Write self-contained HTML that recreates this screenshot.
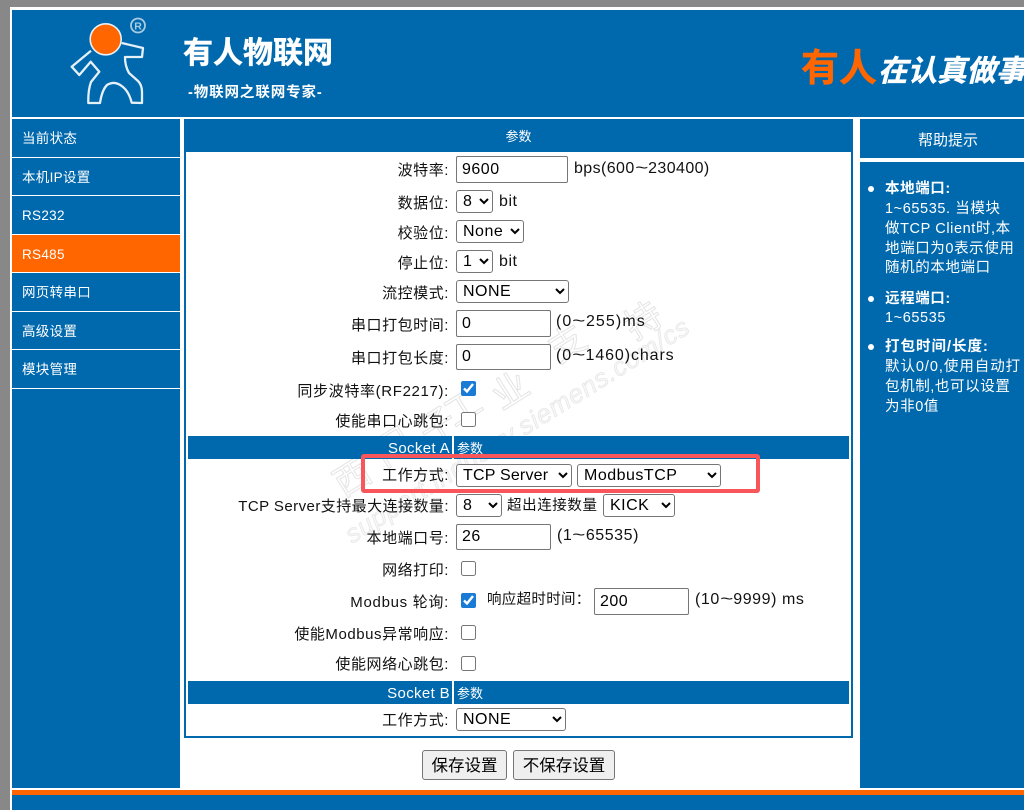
<!DOCTYPE html>
<html lang="zh"><head><meta charset="utf-8"><title>有人物联网</title>
<style>
html,body{margin:0;padding:0;width:1024px;height:810px;overflow:hidden;background:#fff}
body{position:relative;font-family:"Liberation Sans","Noto Sans CJK SC",sans-serif;color:#111}
.a,.l,.t,select,input{position:absolute}
.a{display:block}
.b{background:#0068ad}
.l{right:575px;margin-top:1px;font-size:15px;line-height:20px;white-space:nowrap;letter-spacing:.55px;text-align:right}
.t{font-size:16px;line-height:20px;white-space:nowrap;letter-spacing:.55px}
.t i{font-style:normal;display:inline-block;width:13.5px;letter-spacing:0;text-align:center;transform:scaleX(1.4)}
select,input[type=text]{box-sizing:border-box;margin:0;font-family:"Liberation Sans",sans-serif;font-size:16px;letter-spacing:.5px;color:#000;background:#fff;border:1px solid #767676;border-radius:3px}
select{padding:0 0 0 2px}
input[type=text]{padding:1px 5px;border-radius:2px}
input[type=checkbox]{margin:0;width:15px;height:15px;accent-color:#1a7bd6}
.n{position:absolute;left:12px;width:168px;margin-top:1px;color:#fff;font-size:13.5px;line-height:20px;text-indent:10px;letter-spacing:.3px}
.w{color:#fff;position:absolute;white-space:nowrap}
.h{position:absolute;left:885px;color:#fff;font-size:14.5px;line-height:20px;white-space:nowrap;letter-spacing:.6px}
.d{position:absolute;left:868px;width:6px;height:6px;border-radius:50%;background:#fff}
button{position:absolute;box-sizing:border-box;margin:0;padding:0 0 2px;font-family:"Liberation Sans","Noto Sans CJK SC",sans-serif;font-size:16.5px;color:#000;background:#efefef;border:1px solid #767676;border-radius:3px}
</style></head><body>
<div class="a" style="left:0;top:0;width:1024px;height:7px;background:#888"></div>
<div class="a" style="left:0;top:0;width:10px;height:810px;background:#888"></div>
<div class="a b" style="left:12px;top:10px;width:1012px;height:107px"></div>

<svg class="a" style="left:60px;top:10px" width="100" height="100" viewBox="60 10 100 100">
<path d="M121.700 43L143 48L142 57L125 57Q125 66 129 73L138 81Q142 85 142 92L142 103L131.700 102.700Q129 92 123 87Q115 80 107 85Q102 90 100 103L88.300 103Q88 90 91 82L99.300 71.700L90.700 61.700L79.300 75L71.700 66.700L91 50.700" fill="none" stroke="#e6f0f7" stroke-width="2.300" stroke-linejoin="round"/>
<circle cx="105.700" cy="39.300" r="15.500" fill="#ff6600" stroke="#e6f0f7" stroke-width="1.600"/>
<circle cx="138" cy="25.500" r="7" fill="none" stroke="#a9cbe3" stroke-width="1.800"/>
<text x="138" y="29.500" font-size="10.500" font-weight="bold" fill="#a9cbe3" text-anchor="middle" font-family="Liberation Sans">R</text>
</svg>
<div class="w" style="left:183px;top:34px;font-size:30px;line-height:40px;font-weight:bold;-webkit-text-stroke:.5px #fff">有人物联网</div>
<div class="w" style="left:188px;top:83px;font-size:14.500px;line-height:20px;font-weight:bold;letter-spacing:.9px">-物联网之联网专家-</div>
<div class="w" style="left:801px;top:45px;font-size:38px;line-height:48px;font-weight:bold;color:#ff6600;-webkit-text-stroke:.4px #ff6600">有人</div>
<div class="w" style="left:878px;top:51px;width:146px;overflow:hidden;font-size:29.500px;line-height:42px;font-weight:bold;font-style:italic;-webkit-text-stroke:.5px #fff">在认真做事</div>

<div class="a b" style="left:12px;top:119px;width:168px;height:669px"></div>
<div class="a" style="left:12px;top:157px;width:168px;height:1px;background:#fff"></div>
<div class="a" style="left:12px;top:195px;width:168px;height:1px;background:#fff"></div>
<div class="a" style="left:12px;top:234px;width:168px;height:1px;background:#fff"></div>
<div class="a" style="left:12px;top:235px;width:168px;height:37px;background:#ff6600"></div>
<div class="a" style="left:12px;top:272px;width:168px;height:1px;background:#fff"></div>
<div class="a" style="left:12px;top:311px;width:168px;height:1px;background:#fff"></div>
<div class="a" style="left:12px;top:349px;width:168px;height:1px;background:#fff"></div>
<div class="a" style="left:12px;top:388px;width:168px;height:1px;background:#fff"></div>
<div class="n" style="top:128px">当前状态</div>
<div class="n" style="top:167px">本机IP设置</div>
<div class="n" style="top:205px">RS232</div>
<div class="n" style="top:244px">RS485</div>
<div class="n" style="top:282px">网页转串口</div>
<div class="n" style="top:321px">高级设置</div>
<div class="n" style="top:359px">模块管理</div>

<div class="a" style="left:184px;top:119px;width:665px;height:615px;border:2px solid #0068ad"></div>
<div class="a b" style="left:184px;top:119px;width:669px;height:33px"></div>
<div class="w" style="left:184px;width:669px;text-align:center;top:127px;font-size:13px;line-height:20px">参数</div>

<svg class="a" style="left:330px;top:285px" width="380" height="265" viewBox="330 285 380 265">
<g fill="#fff" stroke="#e4e4e4" stroke-width="1" font-size="36" text-anchor="middle" font-family="Noto Sans CJK SC,sans-serif">
<text x="352" y="490" transform="rotate(-32 352 477)">西</text>
<text x="393" y="460" transform="rotate(-32 393 447)">门</text>
<text x="437" y="438" transform="rotate(-32 437 425)">子</text>
<text x="463" y="420" transform="rotate(-32 463 407)">工</text>
<text x="510" y="403" transform="rotate(-32 510 390)">业</text>
<text x="567" y="356" transform="rotate(-32 567 343)">支</text>
<text x="643" y="333" transform="rotate(-32 643 320)">持</text>
</g>
<text x="352" y="544" font-size="26" font-style="italic" fill="#f7f7f7" stroke="#e6e6e6" stroke-width=".7" font-family="Liberation Sans" textLength="400" lengthAdjust="spacing" transform="rotate(-32 352 544)">support.industry.siemens.com/cs</text>
</svg>

<div class="a b" style="left:188px;top:436px;width:661px;height:23px"></div>
<div class="a" style="left:452px;top:436px;width:2px;height:23px;background:#fff"></div>
<div class="w" style="right:574px;top:439px;font-size:15px;line-height:20px;letter-spacing:.35px">Socket A</div>
<div class="w" style="left:457px;top:439px;font-size:13px;line-height:20px">参数</div>
<div class="a b" style="left:188px;top:681px;width:661px;height:23px"></div>
<div class="a" style="left:452px;top:681px;width:2px;height:23px;background:#fff"></div>
<div class="w" style="right:574px;top:684px;font-size:15px;line-height:20px;letter-spacing:.35px">Socket B</div>
<div class="w" style="left:457px;top:684px;font-size:13px;line-height:20px">参数</div>

<div class="l" style="top:160px">波特率:</div>
<input type="text" value="9600" style="left:456px;top:156px;width:112px;height:27px">
<div class="t" style="left:574px;top:159px;letter-spacing:.4px">bps(600<i>~</i>230400)</div>
<div class="l" style="top:193px">数据位:</div>
<select style="left:456px;top:190px;width:37px;height:23px"><option>8</option></select>
<div class="t" style="left:499px;top:192px">bit</div>
<div class="l" style="top:223px">校验位:</div>
<select style="left:456px;top:220px;width:68px;height:23px"><option>None</option></select>
<div class="l" style="top:253px">停止位:</div>
<select style="left:456px;top:250px;width:37px;height:23px"><option>1</option></select>
<div class="t" style="left:499px;top:252px">bit</div>
<div class="l" style="top:283px">流控模式:</div>
<select style="left:456px;top:280px;width:113px;height:23px"><option>NONE</option></select>
<div class="l" style="top:315px">串口打包时间:</div>
<input type="text" value="0" style="left:456px;top:310px;width:95px;height:27px">
<div class="t" style="left:556px;top:312px;letter-spacing:1.1px">(0<i>~</i>255)ms</div>
<div class="l" style="top:348px">串口打包长度:</div>
<input type="text" value="0" style="left:456px;top:344px;width:95px;height:26px">
<div class="t" style="left:556px;top:346px;letter-spacing:.9px">(0<i>~</i>1460)chars</div>
<div class="l" style="top:381px;letter-spacing:.65px">同步波特率(RF2217):</div>
<input type="checkbox" checked style="left:461px;top:381px">
<div class="l" style="top:411px">使能串口心跳包:</div>
<input type="checkbox" style="left:461px;top:412px">

<div class="l" style="top:465px">工作方式:</div>
<select style="left:456px;top:464px;width:116px;height:23px;letter-spacing:.2px"><option>TCP Server</option></select>
<select style="left:577px;top:464px;width:144px;height:23px"><option>ModbusTCP</option></select>
<div class="l" style="top:496px;letter-spacing:.45px">TCP Server支持最大连接数量:</div>
<select style="left:456px;top:494px;width:46px;height:23px"><option>8</option></select>
<div class="t" style="left:507px;top:496px;font-size:14.500px;letter-spacing:.6px">超出连接数量</div>
<select style="left:603px;top:494px;width:72px;height:23px"><option>KICK</option></select>
<div class="l" style="top:528px">本地端口号:</div>
<input type="text" value="26" style="left:456px;top:524px;width:95px;height:26px">
<div class="t" style="left:557px;top:526px;letter-spacing:.55px">(1<i>~</i>65535)</div>
<div class="l" style="top:560px">网络打印:</div>
<input type="checkbox" style="left:461px;top:561px">
<div class="l" style="top:592px;letter-spacing:.7px">Modbus 轮询:</div>
<input type="checkbox" checked style="left:461px;top:593px">
<div class="t" style="left:487px;top:590px;font-size:14.500px;letter-spacing:.3px">响应超时时间：</div>
<input type="text" value="200" style="left:594px;top:588px;width:95px;height:27px">
<div class="t" style="left:695px;top:590px">(10<i>~</i>9999) ms</div>
<div class="l" style="top:624px">使能Modbus异常响应:</div>
<input type="checkbox" style="left:461px;top:625px">
<div class="l" style="top:654px">使能网络心跳包:</div>
<input type="checkbox" style="left:461px;top:656px">
<div class="l" style="top:710px">工作方式:</div>
<select style="left:456px;top:708px;width:110px;height:23px"><option>NONE</option></select>

<div class="a" style="left:361px;top:454px;width:391px;height:31px;border:4px solid #f9565b;border-radius:3px"></div>

<button style="left:422px;top:750px;width:85px;height:30px">保存设置</button>
<button style="left:513px;top:750px;width:102px;height:30px">不保存设置</button>

<div class="a b" style="left:860px;top:119px;width:164px;height:39px"></div>
<div class="a b" style="left:860px;top:162px;width:164px;height:626px"></div>
<div class="w" style="left:860px;width:176px;text-align:center;top:131px;font-size:15px;line-height:20px">帮助提示</div>
<div class="d" style="top:186px"></div>
<div class="h" style="top:179px;font-weight:bold">本地端口:</div>
<div class="h" style="top:199px">1~65535. 当模块</div>
<div class="h" style="top:219px">做TCP Client时,本</div>
<div class="h" style="top:239px">地端口为0表示使用</div>
<div class="h" style="top:258px">随机的本地端口</div>
<div class="d" style="top:296px"></div>
<div class="h" style="top:289px;font-weight:bold">远程端口:</div>
<div class="h" style="top:308px">1~65535</div>
<div class="d" style="top:344px"></div>
<div class="h" style="top:337px;font-weight:bold;letter-spacing:1px">打包时间/长度:</div>
<div class="h" style="top:357px;letter-spacing:.95px">默认0/0,使用自动打</div>
<div class="h" style="top:377px">包机制,也可以设置</div>
<div class="h" style="top:397px">为非0值</div>

<div class="a" style="left:12px;top:790px;width:1012px;height:5px;background:#ff6600"></div>
<div class="a b" style="left:12px;top:795px;width:1012px;height:15px"></div>
</body></html>
